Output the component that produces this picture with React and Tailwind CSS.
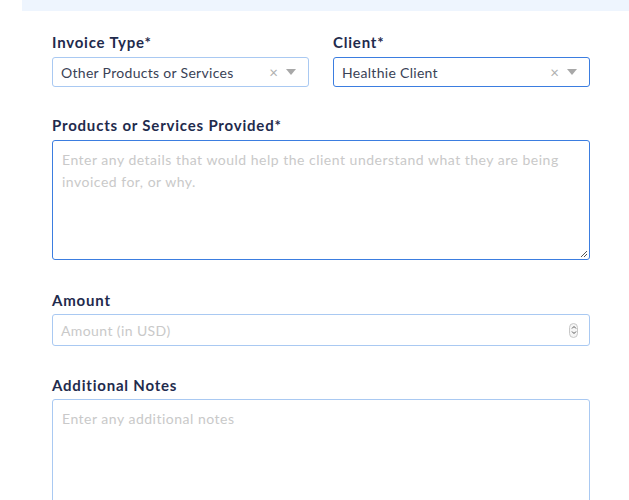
export default function App() {
  const font = { fontFamily: 'Lato, "Open Sans", sans-serif' };

  const Label = ({ children, className }) => (
    <div className={`text-[15px] leading-5 font-bold text-[#1f2b4d] tracking-[0.8px] ${className}`}>{children}</div>
  );

  const SelectBox = ({ value, focused }) => (
    <div
      className={`flex items-center h-[30px] rounded-[3px] border bg-white pl-2 pr-3 ${
        focused ? 'border-[#3b7de0]' : 'border-[#a9c9f2]'
      }`}
    >
      <span className="flex-1 text-[14px] text-[#3a4256] tracking-[0.3px]">{value}</span>
      <span className="text-[15px] text-[#b0b0b0] leading-none mr-2">×</span>
      <svg width="10" height="6" viewBox="0 0 10 6">
        <path d="M0 0 L10 0 L5 6 Z" fill="#a8a8a8" />
      </svg>
    </div>
  );

  return (
    <div className="w-[629px] h-[500px] bg-white overflow-hidden" style={font}>
      <div className="ml-[22px] h-[11px] bg-[#eef5fe]" />
      <div className="pl-[52px] pr-[39px]">
        <div className="grid grid-cols-2 gap-[24px] mt-[21px]">
          <div>
            <Label className="mb-[5px]">Invoice Type*</Label>
            <SelectBox value="Other Products or Services" />
          </div>
          <div>
            <Label className="mb-[5px]">Client*</Label>
            <SelectBox value="Healthie Client" focused />
          </div>
        </div>

        <Label className="mt-[28px] mb-[5px]">Products or Services Provided*</Label>
        <div className="relative h-[120px] rounded-[3px] border border-[#3b7de0] px-[9px] pt-[8px] text-[14px] leading-[22px] text-[#c9c9c9] tracking-[0.5px]">
          Enter any details that would help the client understand what they are being invoiced for, or why.
          <svg className="absolute right-[1px] bottom-[1px]" width="8" height="8" viewBox="0 0 8 8">
            <path d="M1 7 L7 1 M4 7 L7 4" stroke="#555" strokeWidth="1" />
          </svg>
        </div>

        <Label className="mt-[30px] mb-[4px]">Amount</Label>
        <div className="flex items-center h-[32px] rounded-[3px] border border-[#a9c9f2] pl-[8px] pr-[11px]">
          <span className="flex-1 text-[14px] text-[#c9c9c9] tracking-[0.4px]">Amount (in USD)</span>
          <div className="flex flex-col items-center justify-center w-[9px] h-[15px] rounded-full border border-[#c8c8c8] bg-[#f5f5f5]">
            <svg width="6" height="10" viewBox="0 0 6 10">
              <path d="M1 3.5 L3 1.5 L5 3.5 M1 6.5 L3 8.5 L5 6.5" stroke="#555" strokeWidth="1" fill="none" />
            </svg>
          </div>
        </div>

        <Label className="mt-[29px] mb-[4px]">Additional Notes</Label>
        <div className="h-[140px] rounded-[3px] border border-[#a9c9f2] px-[9px] pt-[8px] text-[14px] leading-[22px] text-[#c9c9c9] tracking-[0.5px]">
          Enter any additional notes
        </div>
      </div>
    </div>
  );
}
